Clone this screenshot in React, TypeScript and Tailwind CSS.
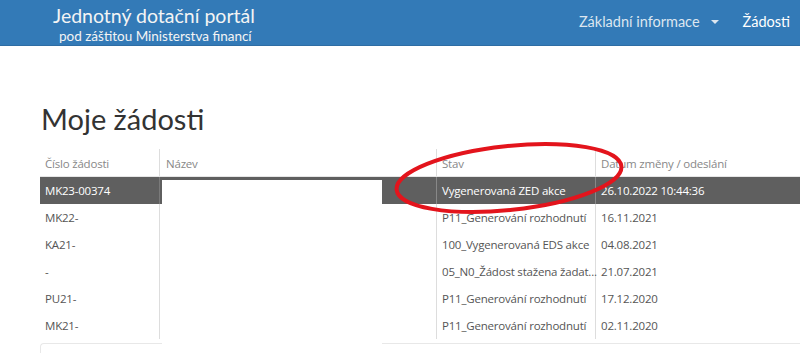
import React from "react";

type Row = { id: string; stav: string; datum: string; selected?: boolean };

const rows: Row[] = [
  { id: "MK23-00374", stav: "Vygenerovaná ZED akce", datum: "26.10.2022 10:44:36", selected: true },
  { id: "MK22-", stav: "P11_Generování rozhodnutí", datum: "16.11.2021" },
  { id: "KA21-", stav: "100_Vygenerovaná EDS akce", datum: "04.08.2021" },
  { id: "-", stav: "05_N0_Žádost stažena žadat...", datum: "21.07.2021" },
  { id: "PU21-", stav: "P11_Generování rozhodnutí", datum: "17.12.2020" },
  { id: "MK21-", stav: "P11_Generování rozhodnutí", datum: "02.11.2020" },
];

export default function App() {
  return (
    <div className="relative w-[800px] h-[353px] overflow-hidden bg-white" style={{ fontFamily: '"Open Sans", "Noto Sans", sans-serif' }}>
      {/* Navbar */}
      <div className="h-[46px] bg-[#337ab7] border-b border-[#2e6da4] flex items-start justify-between text-white" style={{ fontFamily: 'Lato, "Open Sans", sans-serif' }}>
        <div className="pl-[53px] pt-[4px] flex flex-col">
          <div className="text-[19.5px] leading-[24px] text-[#f4f4f4]">Jednotný dotační portál</div>
          <div className="pl-[6px] text-[13.5px] leading-[16px] text-[#f4f4f4]">pod záštitou Ministerstva financí</div>
        </div>
        <div className="flex items-center h-[44px] pr-[10px] text-[14.5px]">
          <div className="flex items-center text-[#dce6f0]">
            <span>Základní informace</span>
            <span className="ml-[11px] w-0 h-0 border-l-[4px] border-r-[4px] border-t-[4px] border-l-transparent border-r-transparent border-t-[#dce6f0]" />
          </div>
          <div className="ml-[24px] text-white">Žádosti</div>
        </div>
      </div>

      {/* Heading */}
      <div className="pl-[41px] pt-[53px] text-[29px] leading-[40px] text-[#333]" style={{ fontFamily: 'Lato, "Open Sans", sans-serif' }}>Moje žádosti</div>

      {/* Table */}
      <div className="mt-[10px] ml-[40px] w-[800px] text-[11.5px] tracking-[-0.2px]">
        <div className="flex h-[28px] text-[#888] border-b border-[#e6e6e6]">
          <div className="w-[120px] pl-[5px] pt-[6px] border-r border-[#ddd]">Číslo žádosti</div>
          <div className="w-[277px] pl-[6px] pt-[6px] border-r border-[#ddd]">Název</div>
          <div className="w-[159px] pl-[5px] pt-[6px] border-r border-[#ddd]">Stav</div>
          <div className="flex-1 pl-[5px] pt-[6px]">Datum změny / odeslání</div>
        </div>
        {rows.map((r) =>
          r.selected ? (
            <div key={r.id} className="flex h-[27px] bg-[#5f5f5f] text-white items-stretch">
              <div className="w-[120px] pl-[5px] flex items-center border-r border-[#7a7a7a]">{r.id}</div>
              <div className="w-[277px] pt-[3px] pl-[2px] border-r border-[#888]">
                <div className="w-[220px] h-full bg-white" />
              </div>
              <div className="w-[159px] pl-[5px] flex items-center border-r border-[#888]">{r.stav}</div>
              <div className="flex-1 pl-[5px] flex items-center">{r.datum}</div>
            </div>
          ) : (
            <div key={r.id} className="flex h-[27px] text-[#555] items-stretch">
              <div className="w-[120px] pl-[5px] flex items-center border-r border-[#ddd]">{r.id}</div>
              <div className="w-[277px] border-r border-[#ddd]" />
              <div className="w-[159px] pl-[5px] flex items-center border-r border-[#ddd] whitespace-nowrap">{r.stav}</div>
              <div className="flex-1 pl-[5px] flex items-center">{r.datum}</div>
            </div>
          )
        )}
        {/* bottom panel */}
        <div className="flex mt-[4px] h-[10px]">
          <div className="w-[122px] border-t border-l border-[#e8e8e8] rounded-tl-[4px]" />
          <div className="w-[220px]" />
          <div className="flex-1 border-t border-[#e8e8e8]" />
        </div>
      </div>

      {/* Red annotation ellipse */}
      <svg className="absolute left-0 top-0 pointer-events-none" width="800" height="353">
        <ellipse cx="509" cy="178" rx="113" ry="32" fill="none" stroke="#e3141c" strokeWidth="4" transform="rotate(-6 509 178)" />
      </svg>
    </div>
  );
}
